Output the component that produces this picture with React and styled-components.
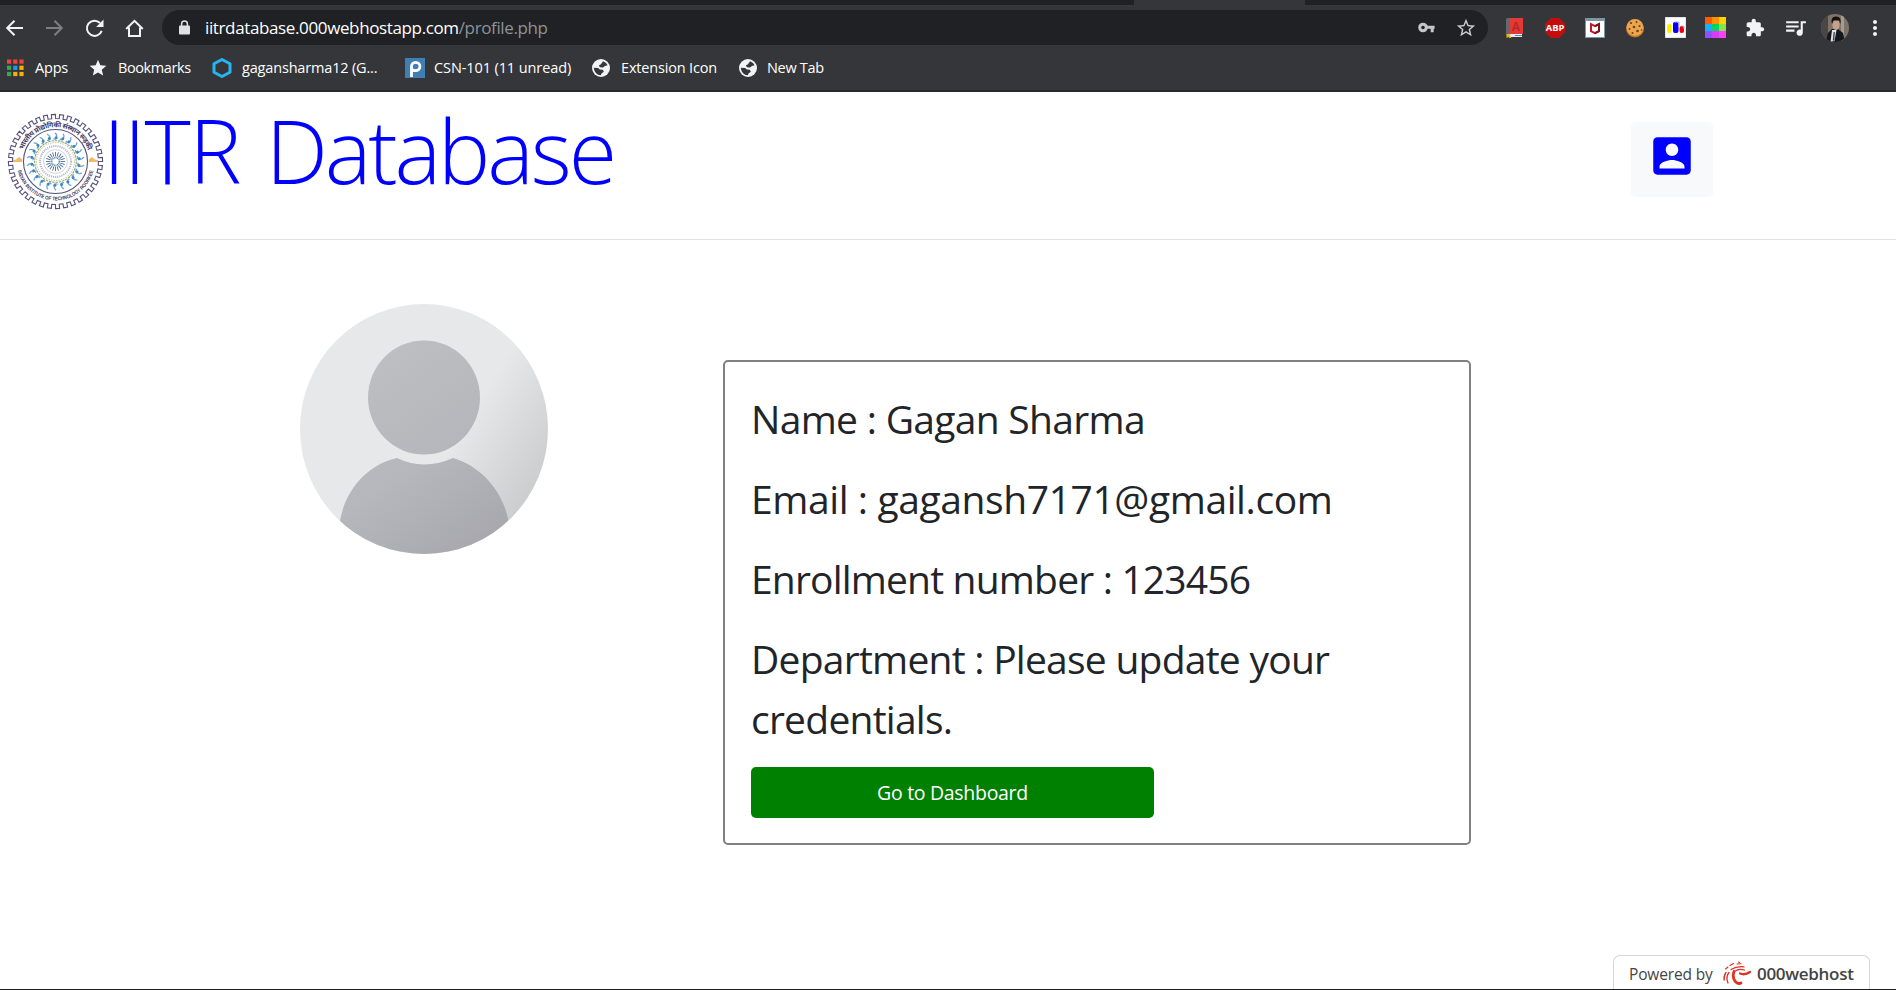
import React from "react";
import styled, { createGlobalStyle } from "styled-components";

const GlobalStyle = createGlobalStyle`
  * { box-sizing: border-box; }
  html, body { margin: 0; padding: 0; background: #fff; overflow: hidden; }
  body { font-family: "Open Sans", "Noto Sans", sans-serif; color: #212529; }
  svg { display: block; flex: none; }
`;

const Screen = styled.div`
  width: 1896px;
  height: 990px;
  display: flex;
  flex-direction: column;
  border-bottom: 1px solid #202124;
  overflow: hidden;
`;

/* ---------- browser chrome ---------- */

const TabStrip = styled.div`
  height: 5px;
  flex: none;
  background: #202124;
  display: flex;
  padding-left: 1134px;
`;

const ActiveTab = styled.div`
  width: 171px;
  height: 5px;
  background: #35363a;
`;

const Chrome = styled.div`
  height: 87px;
  flex: none;
  background: #35363a;
  border-bottom: 2px solid #28292c;
  color: #fff;
`;

const Toolbar = styled.div`
  height: 45px;
  display: flex;
  align-items: center;
`;

const NavButtons = styled.div`
  display: flex;
  gap: 20px;
  width: 162px;
  padding-left: 4px;
`;

const AddressBar = styled.div`
  width: 1326px;
  height: 35px;
  border-radius: 18px;
  background: #202124;
  display: flex;
  align-items: center;
  padding: 0 11px 0 16px;
`;

const Url = styled.div`
  flex: 1;
  margin-left: 14px;
  font-size: 17px;
  line-height: 24px;
  letter-spacing: ${(p) => p.$spacing};
  white-space: nowrap;
`;

const UrlPath = styled.span`
  color: #8f9397;
`;

const AddressActions = styled.div`
  display: flex;
  align-items: center;
  gap: 19px;
`;

const Extensions = styled.div`
  display: flex;
  margin-left: 7px;
`;

const ExtensionSlot = styled.div`
  width: 40px;
  height: 30px;
  display: flex;
  align-items: center;
  justify-content: center;
`;

const BookmarksBar = styled.div`
  height: 36px;
  display: flex;
  align-items: center;
  padding-left: 5px;
`;

const Bookmark = styled.div`
  width: ${(p) => p.$width}px;
  display: flex;
  align-items: center;
  gap: ${(p) => p.$gap}px;
  font-size: 14.5px;
  line-height: 20px;
  letter-spacing: ${(p) => p.$spacing}px;
  white-space: nowrap;
`;

/* ---------- page ---------- */

const Header = styled.header`
  height: 148px;
  flex: none;
  display: flex;
  align-items: flex-start;
  border-bottom: 1px solid #dfe1e3;
  padding-left: 7px;
`;

const LogoBox = styled.div`
  padding-top: 21px;
  width: 96px;
`;

const Title = styled.h1`
  margin: 0;
  font-size: 88px;
  font-weight: 300;
  line-height: 116px;
  color: #0000ff;
  letter-spacing: -1.4px;
  word-spacing: 4px;
  white-space: nowrap;
  flex: 1;
`;

const TitleWord = styled.span`
  letter-spacing: -3.1px;
`;

const AccountButton = styled.button`
  margin: 30px 183px 0 0;
  width: 82px;
  height: 75px;
  border: 0;
  border-radius: 5px;
  background: #f8f9fa;
  display: flex;
  justify-content: center;
  padding: 9px 0 0;
`;

const Profile = styled.main`
  flex: 1;
  display: flex;
  align-items: flex-start;
  padding-left: 300px;
`;

const AvatarBox = styled.div`
  margin: 64px 175px 0 0;
`;

const Card = styled.section`
  margin-top: 120px;
  width: 748px;
  height: 485px;
  border: 2px solid #808080;
  border-radius: 5px;
  padding: 27px 26px;
`;

const Field = styled.p`
  margin: 0 0 20px;
  font-size: 39px;
  line-height: 60px;
  letter-spacing: ${(p) => p.$spacing}px;
  white-space: pre-line;
`;

const DashboardButton = styled.button`
  display: block;
  width: 403px;
  height: 51px;
  margin-top: -2px;
  padding: 0;
  border: 0;
  border-radius: 5px;
  background: #008000;
  color: #fff;
  font: 400 19.5px/51px "Open Sans", sans-serif;
  letter-spacing: ${(p) => p.$spacing}px;
`;

const Footer = styled.footer`
  display: flex;
  justify-content: flex-end;
  padding-right: 26px;
`;

const HostBadge = styled.div`
  width: 257px;
  height: 34px;
  border: 1px solid #d6d6d6;
  border-bottom: 0;
  border-radius: 7px 7px 0 0;
  display: flex;
  align-items: center;
  padding: 2px 0 0 15px;
  color: #444;
  white-space: nowrap;
`;

const PoweredBy = styled.span`
  width: 93px;
  font: 400 15.5px/24px "Open Sans", sans-serif;
  letter-spacing: -0.15px;
`;

const HostName = styled.span`
  margin-left: 5px;
  font: 600 17px/24px "Open Sans", sans-serif;
  letter-spacing: ${(p) => p.$spacing}px;
`;

/* ---------- icons ---------- */

const Glyph = ({ size = 20, color = "#f1f3f4", d }) => (
  <svg width={size} height={size} viewBox="0 0 24 24" fill={color}>
    <path d={d} />
  </svg>
);

const BackIcon = () => (
  <svg width="20" height="20" viewBox="0 0 20 20" fill="none" stroke="#f1f3f4" strokeWidth="2">
    <path d="M19 10H4M10.5 2.7L3.2 10l7.3 7.3" />
  </svg>
);
const ForwardIcon = () => (
  <svg width="20" height="20" viewBox="0 0 20 20" fill="none" stroke="#7d7e81" strokeWidth="2">
    <path d="M2 10h15M10.5 2.7l7.3 7.3-7.3 7.3" />
  </svg>
);
const ReloadIcon = () => (
  <svg width="20" height="20" viewBox="0 0 20 20">
    <path d="M17.7 12.8A7.6 7.6 0 1 1 16 5" fill="none" stroke="#f1f3f4" strokeWidth="2" />
    <path d="M19.5 1.5v7.4h-7.3z" fill="#f1f3f4" />
  </svg>
);
const HomeIcon = () => (
  <svg width="20" height="20" viewBox="0 0 20 20" fill="none" stroke="#f1f3f4" strokeWidth="2">
    <path d="M2.2 11L10.5 2.8 18.8 11M5 9.5V18h11V9.5" />
  </svg>
);
const LockIcon = () => (
  <svg width="13" height="16" viewBox="0 0 13 16">
    <rect x="1" y="5.5" width="11" height="9" rx="1" fill="#dfe1e5" />
    <path d="M3.6 6V4a2.9 2.9 0 0 1 5.8 0v2" fill="none" stroke="#dfe1e5" strokeWidth="1.5" />
  </svg>
);
const KeyIcon = () => (
  <svg width="18" height="20" viewBox="0 0 18 20" fill="none" stroke="#c4c6c9">
    <circle cx="5" cy="9.5" r="3.3" strokeWidth="3" />
    <path d="M8 9.3h8.6M14.2 9.3v5" strokeWidth="3" />
  </svg>
);
const StarOutlineIcon = () => (
  <Glyph
    size={22}
    color="#c8cacd"
    d="M22 9.24l-7.19-.62L12 2 9.19 8.63 2 9.24l5.46 4.73L5.82 21 12 17.27 18.18 21l-1.63-7.03L22 9.24zM12 15.4l-3.76 2.27 1-4.28-3.32-2.88 4.38-.38L12 6.1l1.71 4.04 4.38.38-3.32 2.88 1 4.28L12 15.4z"
  />
);

const DictionaryIcon = () => (
  <svg width="20" height="20" viewBox="0 0 20 20">
    <path d="M5 0h13v16H5z" fill="#e53935" />
    <path d="M1 1q0-1 2-1h2v17H1z" fill="#65676b" />
    <path d="M4 16h13v3H4z" fill="#e4eaf0" />
    <path d="M10 17.5h7" stroke="#4f8fc0" strokeWidth="1" />
    <path d="M1.5 20v-4h4l-1 1 2 3h-2l-1-1z" fill="#f0b400" />
    <text x="11" y="13" fontSize="12" fontWeight="700" textAnchor="middle" fill="#b82a26">A</text>
  </svg>
);
const AbpIcon = () => (
  <svg width="20" height="20" viewBox="0 0 20 20">
    <path d="M6 0h8l6 6v8l-6 6H6l-6-6V6z" fill="#c70d0c" />
    <text x="10" y="13.4" fontSize="9.4" fontWeight="700" textAnchor="middle" fill="#fff">ABP</text>
  </svg>
);
const ShieldIcon = () => (
  <svg width="20" height="20" viewBox="0 0 20 20">
    <path d="M0 0h20v20H0z" fill="#7b96a5" />
    <path d="M1 3h18v16H1z" fill="#fff" />
    <path d="M6 6.2l4 2 4-2v7l-4 2-4-2z" fill="none" stroke="#c0182b" strokeWidth="2" />
    <path d="M10 8.2l4-2v7l-4 2" fill="none" stroke="#7d1422" strokeWidth="2" />
  </svg>
);
const CookieIcon = () => (
  <svg width="20" height="20" viewBox="0 0 20 20">
    <circle cx="10" cy="10.5" r="9" fill="#c67521" />
    <circle cx="10" cy="9.5" r="8.5" fill="#eaa54e" />
    <g fill="#70401b">
      <circle cx="6" cy="5" r="1.1" /><circle cx="11.5" cy="4" r="1" /><circle cx="9" cy="9" r="1.3" />
      <circle cx="14.5" cy="8" r="1.1" /><circle cx="4.5" cy="11" r="1" /><circle cx="12.5" cy="13" r="1.3" />
      <circle cx="7.5" cy="15" r="1" /><circle cx="16.5" cy="12" r=".8" />
    </g>
  </svg>
);
const BarsIcon = () => (
  <svg width="21" height="21" viewBox="0 0 21 21">
    <path d="M0 0h21v21H0z" fill="#fff" stroke="#c8c8c8" />
    <rect x="2" y="7" width="4.5" height="9" rx="2" fill="#ffee00" />
    <rect x="8" y="5" width="5.5" height="11" rx="2" fill="#0b00f0" />
    <rect x="14.5" y="9" width="4.5" height="7" rx="2" fill="#f00000" />
    <path d="M10 5h4v4M16 9h3v3" fill="none" stroke="#b4a8ff" />
  </svg>
);
const paletteRows = [
  ["#ff5a00", "#ff9100", "#ffd200"],
  ["#12b0ff", "#00d563", "#86e34f"],
  ["#9050ff", "#d63bff", "#ff40f5"],
];
const PaletteIcon = () => (
  <svg width="21" height="21" viewBox="0 0 21 21">
    {paletteRows.map((row, y) =>
      row.map((fill, x) => <rect key={fill} x={x * 7} y={y * 7} width="7" height="7" fill={fill} />)
    )}
  </svg>
);
const PUZZLE =
  "M20.5 11H19V7c0-1.1-.9-2-2-2h-4V3.5C13 2.12 11.88 1 10.5 1S8 2.12 8 3.5V5H4c-1.1 0-1.99.9-1.99 2v3.8H3.5c1.49 0 2.7 1.21 2.7 2.7s-1.21 2.7-2.7 2.7H2V20c0 1.1.9 2 2 2h3.8v-1.5c0-1.49 1.21-2.7 2.7-2.7 1.49 0 2.7 1.21 2.7 2.7V22H17c1.1 0 2-.9 2-2v-4h1.5c1.38 0 2.5-1.12 2.5-2.5S21.88 11 20.5 11z";
const QUEUE =
  "M15 6H3v2h12V6zm0 4H3v2h12v-2zM3 16h8v-2H3v2zM17 6v8.18c-.31-.11-.65-.18-1-.18-1.66 0-3 1.34-3 3s1.34 3 3 3 3-1.34 3-3V8h3V6h-5z";
const DOTS =
  "M12 8c1.1 0 2-.9 2-2s-.9-2-2-2-2 .9-2 2 .9 2 2 2zm0 2c-1.1 0-2 .9-2 2s.9 2 2 2 2-.9 2-2-.9-2-2-2zm0 6c-1.1 0-2 .9-2 2s.9 2 2 2 2-.9 2-2-.9-2-2-2z";

const UserPhoto = () => (
  <svg width="28" height="28" viewBox="0 0 28 28">
    <defs>
      <clipPath id="photo"><circle cx="14" cy="14" r="14" /></clipPath>
    </defs>
    <g clipPath="url(#photo)">
      <path d="M0 0h28v28H0z" fill="#7d736b" />
      <path d="M0 0h7v28H0z" fill="#4a4643" />
      <path d="M20 0h3v28h-3z" fill="#a89c92" />
      <path d="M5 28l2-9 4-4 6 0 5 4 2 9z" fill="#14171c" />
      <path d="M11 16l4.5 0-2 11-4 1z" fill="#dfe3e6" />
      <path d="M12.6 18l1.2 0-.5 8-1.5 1z" fill="#2d3742" />
      <ellipse cx="15" cy="10.5" rx="3.6" ry="5.5" fill="#c6a08b" />
      <path d="M11 10q-2-7.500 4-7.500T19.200 10l-1-3.500-5.500 0z" fill="#15110f" />
    </g>
  </svg>
);

const appColors = ["#f44336", "#f44336", "#f44336", "#34a853", "#2196f3", "#fbaf00", "#34a853", "#fbaf00", "#fbaf00"];
const AppsIcon = () => (
  <svg width="20" height="20" viewBox="0 0 20 20">
    {appColors.map((fill, i) => (
      <rect key={i} x={2 + (i % 3) * 6.2} y={1.5 + Math.floor(i / 3) * 6.2} width="4.2" height="4.2" fill={fill} />
    ))}
  </svg>
);
const StarIcon = () => (
  <Glyph d="M12 17.27L18.18 21l-1.64-7.03L22 9.24l-7.19-.61L12 2 9.19 8.63 2 9.24l5.46 4.73L5.82 21z" />
);
const HexagonIcon = () => (
  <svg width="20" height="20" viewBox="0 0 20 20">
    <path d="M10 1.5l8 4.3v8.4l-8 4.3-8-4.3V5.8z" fill="none" stroke="#25b5f5" strokeWidth="3" strokeLinejoin="round" />
  </svg>
);
const PiazzaIcon = () => (
  <svg width="20" height="20" viewBox="0 0 20 20">
    <path d="M0 0h20v20H0z" fill="#417fb2" />
    <path d="M6.5 19V8.5a4.2 4.2 0 1 1 4.2 4.2c-1.5 0-2.5-.4-3.5-1" fill="none" stroke="#fff" strokeWidth="2.8" />
  </svg>
);
const GlobeIcon = () => (
  <svg width="20" height="20" viewBox="0 0 20 20">
    <circle cx="10" cy="10" r="9" fill="#f1f3f4" />
    <path d="M12 3.2C14 4 15.5 5 16.5 7.3l-2.5.8-2 1.5-3-.4-1.2-1.8 2.2-1.2z" fill="#35363a" />
    <path d="M2.8 9.7l4.4.4 1.6 1.5 3 .2 1 2-2.3 1.7-.7 1.8C6 17 3.2 14 2.8 9.7z" fill="#35363a" />
  </svg>
);

const ACCOUNT_BOX =
  "M3 5v14c0 1.1.89 2 2 2h14c1.1 0 2-.9 2-2V5c0-1.1-.9-2-2-2H5c-1.11 0-2 .9-2 2zm12 4c0 1.66-1.34 3-3 3s-3-1.34-3-3 1.34-3 3-3 3 1.34 3 3zm-9 8c0-2 4-3.1 6-3.1s6 1.1 6 3.1v1H6v-1z";

const polar = (radius, angle) => {
  const a = (angle * Math.PI) / 180;
  return `${(48 + radius * Math.cos(a)).toFixed(2)} ${(48 + radius * Math.sin(a)).toFixed(2)}`;
};
const TEETH = 36;
const gearPath =
  Array.from({ length: TEETH }, (_, i) => {
    const a = (i * 360) / TEETH;
    const s = 360 / TEETH;
    return `${i ? "L" : "M"}${polar(42.5, a)}L${polar(42.5, a + s * 0.5)}L${polar(46.6, a + s * 0.5)}L${polar(46.6, a + s)}`;
  }).join("") + "Z";
const ring = (count) => Array.from({ length: count }, (_, i) => (i * 360) / count);

const Seal = () => (
  <svg width="97" height="97" viewBox="0 0 96 96" fill="none">
    <defs>
      <path id="sealTop" d="M14 48a34 34 0 0 1 68 0" />
      <path id="sealBottom" d="M9.5 48a38.5 38.5 0 0 0 77 0" />
    </defs>
    <path d={gearPath} stroke="#55527c" strokeWidth="1.1" />
    <circle cx="48" cy="48" r="31.7" stroke="#55527c" strokeWidth="1.1" />
    <text fontSize="7" fontWeight="700" fill="#3f3d68" fontFamily='"Noto Sans Devanagari", "Noto Sans", sans-serif'>
      <textPath href="#sealTop" startOffset="50%" textAnchor="middle" textLength="84">भारतीय प्रौद्योगिकी संस्थान रूड़की</textPath>
    </text>
    <text fontSize="5.2" fontWeight="700" fill="#3f3d68" fontFamily='"Liberation Sans", sans-serif'>
      <textPath href="#sealBottom" startOffset="50%" textAnchor="middle" textLength="102" lengthAdjust="spacingAndGlyphs">INDIAN INSTITUTE OF TECHNOLOGY ROORKEE</textPath>
    </text>
    <path d="M6 48.5h9v-2.5l-3-2.5-3 2.5-3 .5zM90 48.5h-9v-2.5l3-2.5 3 2.5 3 .5z" fill="#f0b868" />
    {ring(22).map((a) => (
      <g key={a} transform={`rotate(${a} 48 48)`}>
        <path d="M45.8 25.5q2.8 1.2 3.4-1.3t-1.5-4.7" stroke="#6ba6d8" strokeWidth="1.3" />
        <circle cx="48.6" cy="24.4" r="1.5" fill="#3f88c8" />
      </g>
    ))}
    <circle cx="48" cy="48" r="20.6" stroke="#8fa46e" strokeWidth="1.1" strokeDasharray="2.5 .8" />
    <circle cx="48" cy="48" r="18.8" stroke="#c4cda9" strokeWidth="1" strokeDasharray="1.5 1" />
    <circle cx="48" cy="48" r="15.3" stroke="#b3bace" strokeWidth="2" strokeDasharray="1.2 .9" />
    <circle cx="48" cy="48" r="11.8" stroke="#c2c8d8" strokeWidth=".8" />
    {ring(20).map((a) => (
      <path key={a} d="M48 43v-4.5" stroke="#4a7098" strokeWidth=".9" transform={`rotate(${a} 48 48)`} />
    ))}
    <circle cx="48" cy="48" r="3.8" stroke="#6286a9" strokeWidth="1.6" strokeDasharray="1 .6" />
  </svg>
);

const DefaultAvatar = () => (
  <svg width="248" height="250" viewBox="0 0 248 250">
    <defs>
      <clipPath id="avatarClip"><ellipse cx="124" cy="125" rx="124" ry="125" /></clipPath>
      <linearGradient id="avatarBack" x1=".2" y1=".2" x2=".98" y2=".7">
        <stop offset=".58" stopColor="#e7e8ea" />
        <stop offset="1" stopColor="#cbcccd" />
      </linearGradient>
      <linearGradient id="avatarFill" gradientUnits="userSpaceOnUse" x1="60" y1="50" x2="200" y2="250">
        <stop offset="0" stopColor="#bebfc2" />
        <stop offset=".5" stopColor="#b6b7bc" />
        <stop offset="1" stopColor="#a5a5ab" />
      </linearGradient>
    </defs>
    <g clipPath="url(#avatarClip)">
      <path d="M0 0h248v250H0z" fill="url(#avatarBack)" />
      <ellipse cx="124" cy="93.5" rx="56" ry="57" fill="url(#avatarFill)" />
      <path d="M97 154Q124 167 153 154C181 162 203 187 208.5 217V250H40V217C45 186 68 160 97 154z" fill="url(#avatarFill)" />
    </g>
  </svg>
);

const HostLogo = () => (
  <svg width="30" height="26" viewBox="0 0 30 26" fill="none" stroke="#e0301e" strokeLinecap="round">
    <path d="M12 10.5c-2 4.5 0 10 3 11.5 2 .8 3 .6 4 0" strokeWidth="2.8" />
    <path d="M18 12.5c3 1.2 7 .6 10-1.5" strokeWidth="2.3" />
    <path d="M7 11.5c-2.5 3-2.5 7-1 10.5M4 11.5c-1.8 2.5-2.3 5-1.8 7.5" strokeWidth="1.3" />
    <path d="M13 10c3-2 6-2 9.5-1M9 8.5c4-2.5 8-3.3 13-2.7" strokeWidth="1.3" />
    <path d="M3.5 8l2.5-2M8 4.500l3.500-2M15 3l4-.3M16.500 1l1 .5" strokeWidth="1.1" />
  </svg>
);

/* ---------- composition ---------- */

const extensions = [
  <DictionaryIcon />, <AbpIcon />, <ShieldIcon />, <CookieIcon />, <BarsIcon />, <PaletteIcon />,
  <Glyph size={20} d={PUZZLE} />, <Glyph size={25} d={QUEUE} />, <UserPhoto />, <Glyph size={24} d={DOTS} />,
];

const bookmarks = [
  { label: "Apps", icon: <AppsIcon />, width: 83, gap: 10, spacing: -0.2 },
  { label: "Bookmarks", icon: <StarIcon />, width: 124, gap: 10, spacing: -0.4 },
  { label: "gagansharma12 (G...", icon: <HexagonIcon />, width: 193, gap: 10, spacing: -0.17 },
  { label: "CSN-101 (11 unread)", icon: <PiazzaIcon />, width: 186, gap: 9, spacing: -0.1 },
  { label: "Extension Icon", icon: <GlobeIcon />, width: 147, gap: 10, spacing: -0.17 },
  { label: "New Tab", icon: <GlobeIcon />, width: 120, gap: 9, spacing: -0.3 },
];

const fields = [
  { text: "Name : Gagan Sharma", spacing: -0.7 },
  { text: "Email : gagansh7171@gmail.com", spacing: -0.4 },
  { text: "Enrollment number : 123456", spacing: -0.82 },
  { text: "Department : Please update your\ncredentials.", spacing: -0.75 },
];

export default function App() {
  return (
    <Screen>
      <GlobalStyle />
      <TabStrip><ActiveTab /></TabStrip>
      <Chrome>
        <Toolbar>
          <NavButtons><BackIcon /><ForwardIcon /><ReloadIcon /><HomeIcon /></NavButtons>
          <AddressBar>
            <LockIcon />
            <Url $spacing="-0.37px">iitrdatabase.000webhostapp.com<UrlPath>/profile.php</UrlPath></Url>
            <AddressActions><KeyIcon /><StarOutlineIcon /></AddressActions>
          </AddressBar>
          <Extensions>
            {extensions.map((icon, i) => <ExtensionSlot key={i}>{icon}</ExtensionSlot>)}
          </Extensions>
        </Toolbar>
        <BookmarksBar>
          {bookmarks.map((b) => (
            <Bookmark key={b.label} $width={b.width} $gap={b.gap} $spacing={b.spacing}>
              {b.icon}<span>{b.label}</span>
            </Bookmark>
          ))}
        </BookmarksBar>
      </Chrome>
      <Header>
        <LogoBox><Seal /></LogoBox>
        <Title>IITR <TitleWord>Database</TitleWord></Title>
        <AccountButton aria-label="Account"><Glyph size={50} color="#0000ff" d={ACCOUNT_BOX} /></AccountButton>
      </Header>
      <Profile>
        <AvatarBox><DefaultAvatar /></AvatarBox>
        <Card>
          {fields.map((f) => <Field key={f.text} $spacing={f.spacing}>{f.text}</Field>)}
          <DashboardButton $spacing={-0.3}>Go to Dashboard</DashboardButton>
        </Card>
      </Profile>
      <Footer>
        <HostBadge>
          <PoweredBy>Powered by</PoweredBy>
          <HostLogo />
          <HostName $spacing={-0.3}>000webhost</HostName>
        </HostBadge>
      </Footer>
    </Screen>
  );
}
